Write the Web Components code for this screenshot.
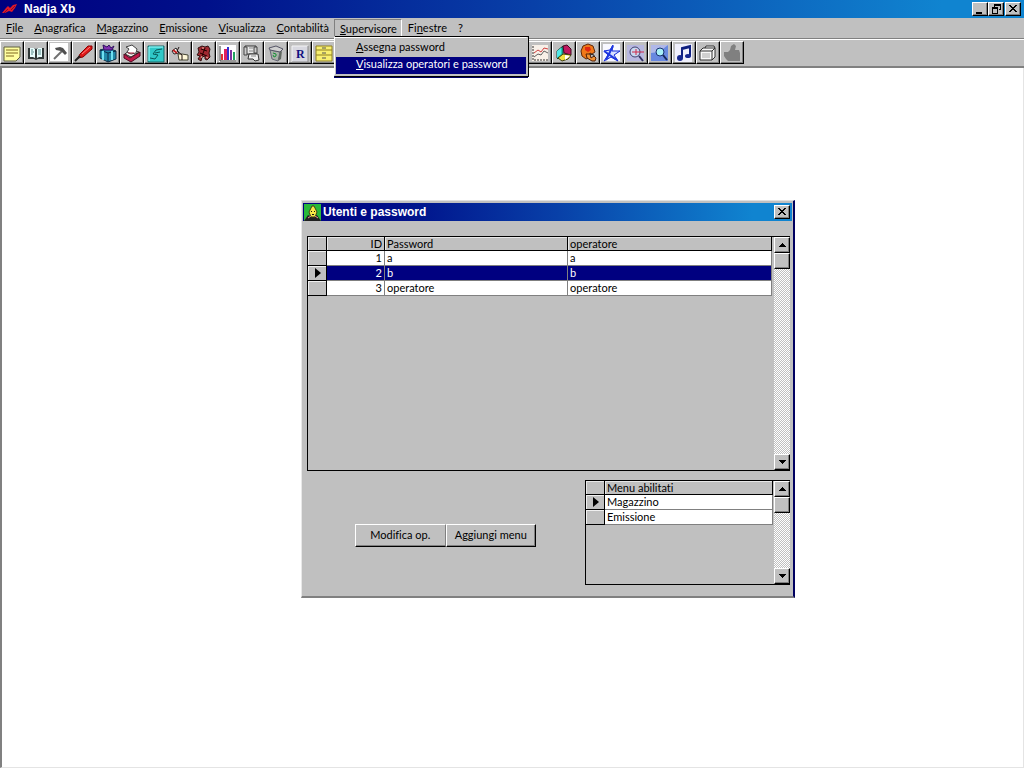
<!DOCTYPE html>
<html lang="it">
<head>
<meta charset="utf-8">
<title>Nadja Xb</title>
<style>
html,body{height:100%;margin:0}
body{font:11px/14px Lato,"Liberation Sans",Arial,sans-serif;font-variant-ligatures:none;color:#000;background:#fff}
</style>
</head>
<body>
<app-shell>
  <title-bar slot="title" heading="Nadja Xb" buttons="min restore close">
    <svg slot="icon" width="16" height="14" viewBox="0 0 16 14"><path d="M0 11L4 6 6 4 8 6 11 3 15 2 13 6 10 10 7 9 3 11Z" fill="#e01828"/><path d="M2 11L6 7M9 8L13 4" stroke="#801030"/></svg>
  </title-bar>
  <menu-bar slot="menu"></menu-bar>
  <tool-bar slot="tools"></tool-bar>
  <dialog-window heading="Utenti e password">
    <data-grid class="users" slot="main" label="Utenti" cols='["ID","Password","operatore"]' widths="[58,183,204]" rows='[["1","a","a"],["2","b","b"],["3","operatore","operatore"]]' current="1" highlight></data-grid>
    <push-button slot="actions">Modifica op.</push-button>
    <push-button slot="actions">Aggiungi menu</push-button>
    <data-grid class="menus" slot="side" label="Menu abilitati" cols='["Menu abilitati"]' widths="[168]" rows='[["Magazzino"],["Emissione"]]' current="0"></data-grid>
  </dialog-window>
</app-shell>
<script>
const define = (name, render) => customElements.define(name, class extends HTMLElement {
  connectedCallback() {
    if (this.shadowRoot) return;
    this.attachShadow({mode: 'open'}).innerHTML = render(this);
  }
});

define('app-shell', () => `<style>
:host{display:flex;flex-direction:column;min-height:100vh;background:#c0c0c0}
main{flex:1;position:relative;background:#fff;border:solid #e4e4e4;border-width:0 1px 1px 0;border-left:2px solid #808080}
</style>
<slot name="title"></slot><slot name="menu"></slot><slot name="tools"></slot><main><slot></slot></main>`);

const glyphs = {
  min: ['Riduci a icona', '<path d="M2 9h6v2H2z"/>'],
  restore: ['Ripristina', '<path d="M4 1h7v6H9V6h1V3H5v1H4zM2 4h6v7H2zM3 6v4h4V6z" fill-rule="evenodd"/>'],
  close: ['Chiudi', '<path d="M2 2h2v1h1v1h2V3h1V2h2v1H9v1H8v1H7v1h1v1h1v1h1v1H8V8H7V7H5v1H4v1H2V8h1V7h1V6h1V5H4V4H3V3H2z" shape-rendering="crispEdges"/>']
};
define('title-bar', el => `<style>
:host{display:flex;align-items:center;height:18px;padding:0 3px 0 2px;box-sizing:border-box;background:linear-gradient(90deg,#000080,#00108a 20%,#0840a8 52%,#1084d0 92%);color:#fff}
h1{flex:1;margin:0 0 0 6px;font:bold 12px/14px "Liberation Sans",Arial,sans-serif}
:host([compact]) h1{margin-left:2px}
:host([compact]){padding:0 2px 0 1px}
button{box-sizing:border-box;width:16px;height:14px;padding:0;border:1px solid;border-color:#fff #000 #000 #fff;background:#c0c0c0;box-shadow:inset -1px -1px #808080;display:grid;place-items:center}
button.close{margin-left:1px}
</style>
<slot name="icon"></slot><h1>${el.getAttribute('heading')}</h1>
${el.getAttribute('buttons').split(' ').map(b => `<button class="${b}" aria-label="${glyphs[b][0]}"><svg width="12" height="12" viewBox="0 0 12 12">${glyphs[b][1]}</svg></button>`).join('')}`);

define('menu-bar', () => `<style>
:host{display:block;position:relative;z-index:5}
nav{display:flex;box-sizing:border-box;height:21px;border-bottom:1px solid #808080;box-shadow:0 1px #fff}
.item{position:relative;padding:1px 0 0}
button{display:block;font:inherit;font-variant-ligatures:none;color:inherit;background:none;border:1px solid transparent;padding:1px 4px 2px 5px;height:18px;box-sizing:border-box;line-height:14px;white-space:nowrap}
.open>button{border-color:#808080 #fff #fff #808080;padding:2px 4px 1px 5px}
u{text-underline-offset:1px;text-decoration-thickness:1px}
.pop{position:absolute;left:0;top:19px;width:194px;box-sizing:border-box;border:1px solid #fff;border-width:1px 2px 2px 1px;border-right-color:#c0c0c0;border-bottom-color:#c0c0c0;background:#c0c0c0;padding:2px 0 0 1px;box-shadow:1px 1px #000,0 2px #000060,1px -1px #000}
.pop button{width:100%;text-align:left;padding:0 20px 3px;border:0 solid;height:17px}
.pop .sel{background:#000080;color:#fff}
</style>
<nav role="menubar">${[['', 'F', 'ile'], ['', 'A', 'nagrafica'], ['', 'M', 'agazzino'], ['', 'E', 'missione'], ['', 'V', 'isualizza'], ['', 'C', 'ontabilità'], ['', 'S', 'upervisore'], ['Fi', 'n', 'estre'], ['?', '', '']].map(([a, k, b]) =>
  `<div class="item ${k === 'S' ? 'open' : ''}"><button role="menuitem">${a}${k ? `<u>${k}</u>` : ''}${b}</button>${k === 'S' ? '<div class="pop" role="menu"><button role="menuitem"><u>A</u>ssegna password</button><button role="menuitem" class="sel"><u>V</u>isualizza operatori e password</button></div>' : ''}</div>`).join('')}</nav>`);

const tools = [
  ['Note', '<path d="M3 4h16v10l-4 4H3z" fill="#ffffa0" stroke="#606040"/><path d="M5 7h12M5 10h12M5 13h8" stroke="#806820"/>'],
  ['Libro', '<path d="M3 5h6l2 1 2-1h6v11h-6l-2 1-2-1H3z" fill="#303838"/><path d="M5 5h4l1 1v9l-2-1H5zM12 6l1-1h4v9h-3l-2 1z" fill="#e8fcfc"/><path d="M6 7h2M6 9h3M6 11h2M13 7h3M13 9h3M13 11h3" stroke="#588"/>'],
  ['Martello', '<path d="M1 0h18v18H1z" fill="#fff"/><path d="M5 16L13 8" stroke="#707070" stroke-width="2"/><path d="M6 5l5-1 3 1 4 5-2 2-4-4-5-1z" fill="#505050"/>'],
  ['Penna', '<path d="M5 15l2-4L15 3l4 0v3L10 14z" fill="#e01818" stroke="#800" /><path d="M2 18l5-5" stroke="#222" stroke-width="2"/><path d="M9 11l8-7" stroke="#ff8080"/>'],
  ['Regalo', '<path d="M3 7l8-2 8 3v8l-8 3-8-4z" fill="#2088a8" stroke="#103048"/><path d="M3 7l8 3 8-2M11 10v9" stroke="#082848" fill="none"/><path d="M6 8v9M15 8v9" stroke="#70e0f0" stroke-width="2"/><path d="M6 2l4 2 2-2 2 3 3-2-2 4H7z" fill="#8030b0" stroke="#301060"/>'],
  ['Timbro', '<path d="M3 11l6 4 10-6v4l-9 6-7-4z" fill="#c01848" stroke="#500820"/><path d="M4 11l5-4 9 2-8 5z" fill="#f8f0f0" stroke="#302020"/><path d="M5 4l6-2 5 4-1 4-5 1-4-2 2-3z" fill="#fff" stroke="#444"/><path d="M7 10h6" stroke="#b02040"/>'],
  ['Stato', '<path d="M3 3h16v16H3z" fill="#30c8c8" stroke="#186868"/><path d="M17 6l-6 1-3 4 5 1-3 4-5-1M10 10l5-1" stroke="#085858" fill="none"/><path d="M4 4h14M4 4v14" stroke="#a0ffff"/>'],
  ['Collega', '<path d="M3 8l4-3 3 5-5 1z" fill="#fff" stroke="#222"/><path d="M9 11h4l6 1v5h-9z" fill="#fff8d8" stroke="#443"/><path d="M10 4l-2 4 5 4M13 12v5" stroke="#201010"/><path d="M4 7l4 3" stroke="#c02020" stroke-width="2"/>'],
  ['Operatore', '<path d="M5 5l4-2 3 1 3-1 2 3-1 4 1 4-3 3-2-1v-3l-3 1-1 4-3-2 2-3-3-1 2-3z" fill="#a02830" stroke="#301010"/><path d="M8 6l6 2M7 10l7 3M12 5l-3 8" stroke="#200"/><path d="M13 14l2 1M9 5h2M8 15l1-2" stroke="#f0b0a0"/>'],
  ['Grafico', '<path d="M2 2h17v17H2z" fill="#fff"/><path d="M4 17v-6h2v6z" fill="#e03030"/><path d="M7 17V6h3v11z" fill="#e02060"/><path d="M10 17V4h2v13z" fill="#3030d0"/><path d="M13 17V7h2v10z" fill="#8030a0"/><path d="M16 17v-8h2v8z" fill="#20a060"/><path d="M3 3v15h16" stroke="#333" fill="none"/>'],
  ['Stampa', '<path d="M4 3h11v8H4z" fill="#e8e8e8" stroke="#333"/><path d="M3 4h3v8H3zM13 4h3v6h-3z" fill="#ccc" stroke="#444"/><path d="M8 11h9l1 6-4 1-2-2H7z" fill="#f0f0f0" stroke="#333"/><path d="M8 5h4M8 8h4M10 13h5" stroke="#888"/>'],
  ['Cestino', '<path d="M5 7l10 2-2 9-6-2z" fill="#a8b0a8" stroke="#667"/><path d="M4 5l7-2 7 3-3 3-10-2z" fill="#d0d0d0" stroke="#556"/><path d="M15 9l2-1-1 8-3 2" fill="#606860"/><path d="M8 10l3 1v2l-2 1-1-2" fill="none" stroke="#189038"/>'],
  ['Registro', '<path d="M3 3h16v16H3z" fill="#d8d8e0"/><path d="M3 19V3h16" stroke="#f4f4f4"/><path d="M19 3v16H3" stroke="#888"/><text x="7" y="15" font-family="Liberation Serif,serif" font-weight="bold" font-size="12" fill="#101080">R</text>'],
  ['Archivio', '<path d="M3 3h16v15H3z" fill="#f8f070" stroke="#908020"/><path d="M3 7h16M3 12h16" stroke="#908020"/><path d="M9 5h4M9 10h4M9 15h4" stroke="#555"/>'],
  ...Array.from({length: 8}, (_, i) => ['Strumento ' + (i + 15), '']),
  ['Andamento', '<path d="M3 2h16v16H3z" fill="#f8f0e8"/><path d="M4 3v14h15" stroke="#333" fill="none" stroke-dasharray="2 1"/><path d="M5 10l4-3 3 2 3-4 4 1" stroke="#d04040" fill="none"/><path d="M5 14l4-3 3 1 3-4 4 2" stroke="#606060" fill="none"/>'],
  ['Torta', '<path d="M4 8l6-5v8l-5 5-1-1z" fill="#20c8b0" stroke="#104038"/><path d="M10 3l4-1 4 4v6l-7-2z" fill="#c01860" stroke="#400820"/><path d="M10 11l8 1-3 4-6 2-4-3z" fill="#f0e040" stroke="#404010"/><path d="M4 8l4-3v6l-4 4z" fill="#50e8e8"/><path d="M12 12l5 1-5 4z" fill="#fff"/>'],
  ['Casco', '<path d="M4 8l2-5 5-2 5 2 2 6-3 2-2-1-1 5-3 1-4-3z" fill="#f07818" stroke="#602808"/><path d="M8 4h5l1 3-3 2-3-2z" fill="#e02810"/><path d="M9 11h4l1 4 3-2 2 2-1 3h-3l-5-3z" fill="#f09030" stroke="#502008"/><path d="M13 11l4 1v2" stroke="#222" fill="none"/>'],
  ['Stella', '<path d="M2 1h17v17H2z" fill="#f8f8ff"/><path d="M12 2l-1 6 8 0-6 4 4 6-7-4-7 4 4-6-4-4 6-1z" fill="#d8e0ff" stroke="#1028d8"/><path d="M3 8l13 9M12 3L5 17" stroke="#2038e0" stroke-width="2"/>'],
  ['Cerca', '<path d="M2 2h17v16H2z" fill="#b8b8e0"/><circle cx="10" cy="9" r="5" fill="#c8d8f0" stroke="#404070"/><path d="M14 13l4 5" stroke="#303060" stroke-width="2"/><path d="M7 9h12M11 6v6" stroke="#d02848"/>'],
  ['Zoom', '<path d="M2 2h17v16H2z" fill="#6888e0"/><path d="M2 2h17L10 9zM2 2v8l8-1z" fill="#b0b8e8"/><circle cx="11" cy="9" r="4" fill="#a8f0f8" stroke="#183070"/><path d="M14 12l4 5" stroke="#182858" stroke-width="2"/>'],
  ['Musica', '<path d="M2 1h17v18H2z" fill="#f0f0fc"/><path d="M9 15V5l8-2v10M9 6l8-2" stroke="#102080" stroke-width="2" fill="none"/><ellipse cx="7" cy="15" rx="3" ry="3" fill="#182890"/><ellipse cx="15" cy="13" rx="3" ry="2" fill="#182890"/>'],
  ['Scheda', '<path d="M3 8l3-3h2l1-2h8l1 2v9l-3 3H3z" fill="#f8f8f8" stroke="#303030"/><path d="M3 8h12v9M15 8l3-3M8 5h10" stroke="#303030" fill="none"/><path d="M5 10h8v5H5z" fill="#d0d0d0"/>'],
  ['Mano', '<path d="M3 9h4l2-2 1-4 3-2 2 2-1 4 4 0 1 3v8H7l-2-2-2-3z" fill="#808080"/>']
];
define('tool-bar', () => `<style>
:host{display:flex;height:29px;box-sizing:border-box;padding-top:2px;background:#c0c0c0;border-bottom:2px solid #808080}
button{box-sizing:border-box;flex:none;width:24px;height:23px;padding:0;border:1px solid;border-color:#fff #000 #000 #fff;background:#c0c0c0;box-shadow:inset -1px -1px #808080}
svg{display:block}
</style>${tools.map(([n, s]) => `<button aria-label="${n}"><svg width="21" height="20" viewBox="0 0 21 20" fill="none">${s}</svg></button>`).join('')}`);

define('push-button', () => `<style>
:host{display:block;flex:1}
button{width:100%;height:23px;box-sizing:border-box;font:inherit;font-variant-ligatures:none;color:inherit;padding:0 0 1px;background:#c0c0c0;border:1px solid;border-color:#fff #000 #000 #fff;box-shadow:inset -1px -1px #808080;white-space:nowrap}
:host(:first-of-type) button{border-right-color:#808080;box-shadow:inset 0 -1px #808080}
</style><button><slot></slot></button>`);

define('scroll-bar', () => `<style>
:host{display:flex;flex-direction:column;width:16px;background:repeating-conic-gradient(#fff 0 25%,#c0c0c0 0 50%) 0 0/2px 2px}
button,.thumb{box-sizing:border-box;height:16px;width:16px;padding:0;border:1px solid;border-color:#fff #000 #000 #fff;background:#c0c0c0;box-shadow:inset -1px -1px #808080;display:grid;place-items:center}
.gap{flex:1}
svg{shape-rendering:crispEdges}
</style><button aria-label="Su"><svg width="7" height="4"><path d="M3 0h1v1h1v1h1v1h1v1H0V3h1V2h1V1h1z"/></svg></button><div class="thumb"></div><div class="gap"></div><button aria-label="Giù"><svg width="7" height="4"><path d="M0 0h7v1H6v1H5v1H4v1H3V3H2V2H1V1H0z"/></svg></button>`);

define('data-grid', el => {
  const [cols, widths, rows] = ['cols', 'widths', 'rows'].map(k => JSON.parse(el.getAttribute(k)));
  const cur = +el.getAttribute('current');
  return `<style>
:host{display:flex;justify-content:space-between;box-sizing:border-box;border:1px solid #000;border-right:0}
table{border-collapse:separate;border-spacing:0;table-layout:fixed;width:${widths.reduce((a, b) => a + b, 19)}px;align-self:flex-start}
td,th{box-sizing:border-box;height:15px;line-height:14px;padding:0 2px;font-weight:normal;text-align:left;white-space:nowrap;border:solid #808080;border-width:0 1px 1px 0;background:#fff}
thead th{height:14px;line-height:13px;background:#c0c0c0;border-color:#000;box-shadow:inset 1px 1px #e8e8e8}
tbody th{background:#c0c0c0;border-color:#000;box-shadow:inset 1px 1px #f0f0f0;padding:0}
svg{display:block;margin:0 auto 0 7px}
.num{text-align:right}
.hl td{background:#000080;color:#fff}
</style><table aria-label="${el.getAttribute('label')}"><colgroup><col style="width:19px">${widths.map(w => `<col style="width:${w}px">`).join('')}</colgroup>
<thead><tr><th></th>${cols.map(c => `<th scope="col" class="${c === 'ID' ? 'num' : ''}">${c}</th>`).join('')}</tr></thead>
<tbody>${rows.map((r, i) => `<tr class="${i === cur && el.hasAttribute('highlight') ? 'hl' : ''}"><th scope="row">${i === cur ? '<svg width="6" height="10"><path d="M0 0L6 5 0 10z"/></svg>' : ''}</th>${r.map((c, j) => `<td class="${cols[j] === 'ID' ? 'num' : ''}">${c}</td>`).join('')}</tr>`).join('')}</tbody></table><scroll-bar></scroll-bar>`;
});

define('dialog-window', el => `<style>
:host{position:absolute;left:299px;top:132px;width:494px;box-sizing:border-box;background:#c0c0c0;border:solid;border-width:1px 2px 2px 1px;border-color:#e0e0e0 #000060 #808080 #e8e8e8;padding:2px 1px 11px}
.body{padding:15px 2px 0 4px;display:grid;row-gap:9px}
::slotted([slot=main]){height:235px}
::slotted([slot=side]){width:205px;height:105px}
.lower{display:flex;justify-content:space-between}
.actions{display:flex;width:181px;margin:44px 0 0 48px;align-self:flex-start}
</style><title-bar compact heading="${el.getAttribute('heading')}" buttons="close"><svg slot="icon" width="17" height="17" viewBox="0 0 17 17"><path d="M0 0h17v17H0z" fill="#28b838"/><path d="M0 17l4-6 4 2 5-2 4 6z" fill="#202020"/><path d="M5 8l3-6h2l3 6-2 5H7z" fill="#f8e848" stroke="#404010"/><path d="M7 7h1v1H7zM10 7h1v1h-1zM8 10h2v1H8z" fill="#111"/><path d="M4 14l3-2M14 14l-3-2" stroke="#f09090"/></svg></title-bar>
<div class="body"><slot name="main"></slot><div class="lower"><div class="actions"><slot name="actions"></slot></div><slot name="side"></slot></div></div>`);
</script>
</body>
</html>
